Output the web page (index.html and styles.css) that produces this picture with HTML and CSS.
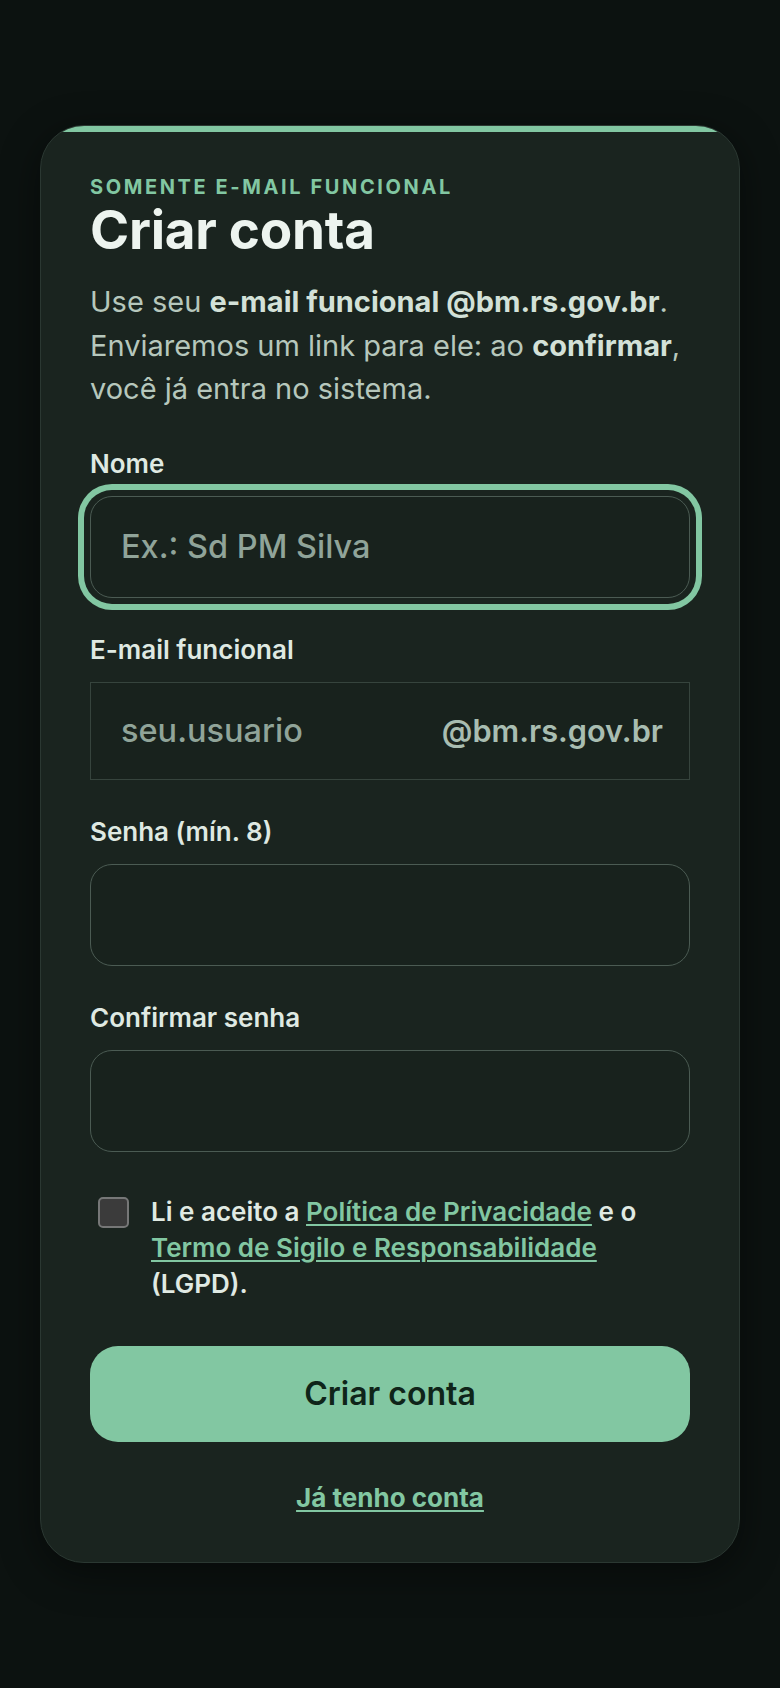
FILE: index.html
```html
<!DOCTYPE html>
<html lang="pt-BR">
<head>
<meta charset="utf-8">
<meta name="viewport" content="width=device-width, initial-scale=1">
<title>Criar conta</title>
<link rel="stylesheet" href="styles.css">
</head>
<body>
<main class="page">
  <section class="card">
    <p class="eyebrow">SOMENTE E-MAIL FUNCIONAL</p>
    <h1 class="title">Criar conta</h1>
    <p class="lead">Use seu <strong>e-mail funcional @bm.rs.gov.br</strong>. Enviaremos um link para ele: ao <strong>confirmar</strong>, você já entra no sistema.</p>

    <form class="form">
      <div class="field">
        <label class="label" for="nome">Nome</label>
        <input class="input input-focus" id="nome" type="text" placeholder="Ex.: Sd PM Silva">
      </div>
      <div class="field">
        <label class="label" for="email">E-mail funcional</label>
        <div class="email-group">
          <input class="email-input" id="email" type="text" placeholder="seu.usuario">
          <span class="email-suffix">@bm.rs.gov.br</span>
        </div>
      </div>
      <div class="field">
        <label class="label" for="senha">Senha (mín. 8)</label>
        <input class="input" id="senha" type="password">
      </div>
      <div class="field">
        <label class="label" for="confirma">Confirmar senha</label>
        <input class="input" id="confirma" type="password">
      </div>

      <label class="consent">
        <span class="checkbox"></span>
        <span class="consent-text">Li e aceito a <a class="link" href="#">Política de Privacidade</a> e o <a class="link" href="#">Termo de Sigilo e Responsabilidade</a> (LGPD).</span>
      </label>

      <button class="submit" type="button">Criar conta</button>
      <a class="back-link" href="#">Já tenho conta</a>
    </form>
  </section>
</main>
</body>
</html>
```
FILE: styles.css
```css
* { box-sizing: border-box; }

html, body {
  margin: 0;
  padding: 0;
  background: #0c1210;
}

body {
  font-family: Inter, "Noto Sans", sans-serif;
  color: #dfe9e2;
  min-height: 1688px;
}

.page {
  display: flex;
  justify-content: center;
  padding: 125px 40px 0;
}

.card {
  position: relative;
  width: 700px;
  background: #1a241f;
  border: 1px solid #2b3832;
  border-radius: 44px;
  overflow: hidden;
  padding: 49px 49px 49px;
  box-shadow: 0 10px 40px rgba(0, 0, 0, 0.45);
}

.card::before {
  content: "";
  position: absolute;
  left: 0;
  right: 0;
  top: 0;
  height: 6px;
  background: #82c7a2;
}

.eyebrow {
  margin: 0;
  font-size: 20px;
  line-height: 24px;
  font-weight: 700;
  letter-spacing: 0.13em;
  color: #82c7a2;
}

.title {
  margin: 3px 0 0;
  font-size: 53px;
  line-height: 57px;
  font-weight: 700;
  letter-spacing: -0.005em;
  color: #edf4ef;
}

.lead {
  margin: 21px 0 0;
  font-size: 29px;
  line-height: 43.5px;
  font-weight: 400;
  color: #b6c7bc;
}

.lead strong {
  font-weight: 700;
  color: #d3e1d8;
}

.form {
  display: flex;
  flex-direction: column;
  margin-top: 37px;
}

.field {
  display: flex;
  flex-direction: column;
  margin-bottom: 36px;
}

.label {
  font-size: 26px;
  line-height: 31px;
  font-weight: 600;
  color: #dfe9e2;
  margin-bottom: 17px;
}

.input {
  height: 102px;
  width: 100%;
  padding: 0 30px;
  background: #18221d;
  border: 1px solid #4b5b53;
  border-radius: 22px;
  font-family: inherit;
  font-size: 32.5px;
  font-weight: 500;
  color: #dfe9e2;
  outline: none;
}

.input::placeholder,
.email-input::placeholder {
  color: #90a499;
  opacity: 1;
}

.input-focus {
  box-shadow: 0 0 0 6px #1a241f, 0 0 0 12px #82c7a2;
}

.email-group {
  display: flex;
  align-items: center;
  height: 98px;
  border: 1px solid #36443d;
  background: #18221d;
}

.email-input {
  flex: 1;
  min-width: 0;
  height: 100%;
  padding: 0 30px;
  background: transparent;
  border: 0;
  font-family: inherit;
  font-size: 32.5px;
  font-weight: 500;
  color: #dfe9e2;
  outline: none;
}

.email-suffix {
  padding-right: 26px;
  font-size: 30.7px;
  font-weight: 600;
  color: #a8bdb1;
}

.consent {
  display: flex;
  align-items: flex-start;
  gap: 22px;
  margin-top: 6px;
  padding-left: 8px;
}

.checkbox {
  flex: none;
  width: 31px;
  height: 31px;
  margin-top: 3px;
  background: #3b3b3b;
  border: 2px solid #767777;
  border-radius: 5px;
}

.consent-text {
  font-size: 26px;
  line-height: 36px;
  font-weight: 600;
  color: #e0eae3;
}

.link {
  color: #82c7a2;
  text-decoration: underline;
  text-underline-offset: 3px;
  text-decoration-thickness: 2px;
}

.submit {
  margin-top: 44px;
  height: 96px;
  width: 100%;
  border: 0;
  border-radius: 28px;
  background: #82c7a2;
  color: #0f2419;
  font-family: inherit;
  font-size: 32px;
  font-weight: 600;
}

.back-link {
  align-self: center;
  margin-top: 40px;
  font-size: 26px;
  line-height: 31px;
  font-weight: 700;
  color: #82c7a2;
  text-decoration: underline;
  text-underline-offset: 3px;
  text-decoration-thickness: 2px;
}
```
